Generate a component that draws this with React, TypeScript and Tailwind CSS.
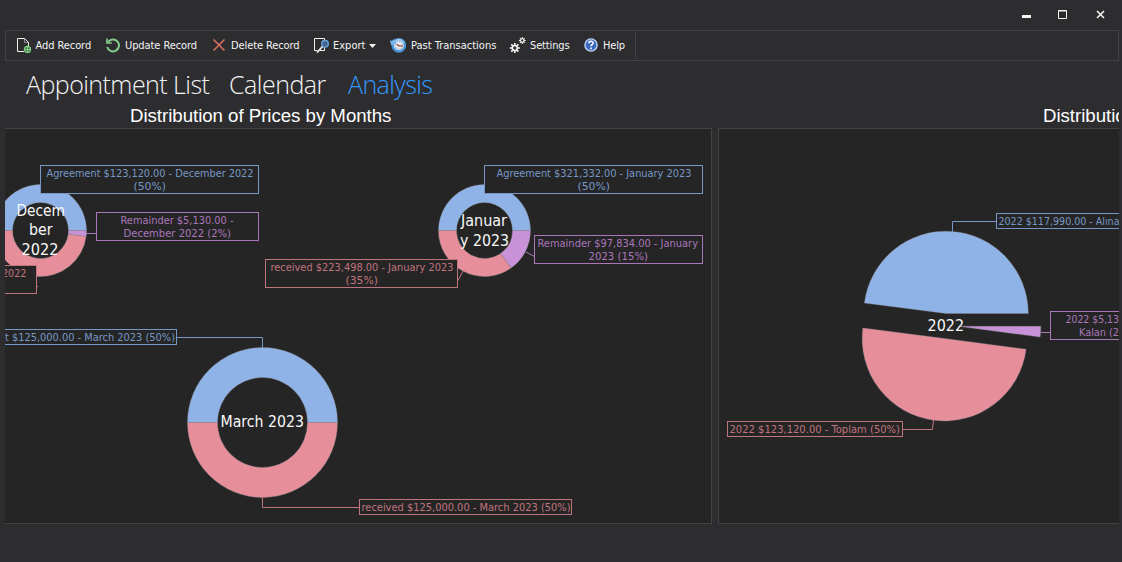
import type { ReactNode } from "react";

const BLUE = "#8fb3e6";
const RED = "#e68e99";
const PURPLE = "#c792d8";
const BLUE_LINE = "#7797c6";
const RED_LINE = "#c0747e";
const PURPLE_LINE = "#aa77ba";

function AddIcon() {
  return (
    <svg className="size-4 shrink-0" viewBox="0 0 16 16" fill="none">
      <path d="M8 14.500H1.500v-13h7l4 4V9" stroke="#f0f0f0" />
      <path d="M8.500 1.500v4h4" stroke="#f0f0f0" strokeOpacity=".6" strokeWidth=".8" />
      <circle cx="11.500" cy="12.500" r="3" fill="#2d2d30" stroke="#7fcf85" strokeWidth="1.300" />
      <path d="M11.500 10v5M9 12.500h5" stroke="#7fcf85" strokeWidth="1.300" />
    </svg>
  );
}

function UpdateIcon() {
  return (
    <svg className="size-4 shrink-0" viewBox="0 0 16 16" fill="none" stroke="#82cc88" strokeWidth="2">
      <path d="M3.200 4.800A6 6 0 1 1 2.200 10" />
      <path d="M2 1.500V6h4.800" strokeWidth="1.700" />
    </svg>
  );
}

function DeleteIcon() {
  return (
    <svg className="size-4 shrink-0" viewBox="0 0 16 16" stroke="#d8705f" strokeWidth="1.600">
      <path d="M1.500 2.500l11 11M12.500 2.500l-11 11" />
    </svg>
  );
}

function ExportIcon() {
  return (
    <svg className="size-4 shrink-0" viewBox="0 0 16 16" fill="none">
      <path d="M4.500 13.500h-3v-12h10v2M11.500 10v3.500H7" stroke="#f0f0f0" />
      <circle cx="12" cy="6.800" r="3.300" fill="#44618a" stroke="#65a5dc" strokeWidth="1.300" />
      <path d="M9.500 9.500L4 15.500" stroke="#f0f0f0" strokeWidth="1.800" />
    </svg>
  );
}

function HistoryIcon() {
  return (
    <svg className="size-4 shrink-0 overflow-visible" viewBox="0 0 16 16" fill="none">
      <circle cx="8.800" cy="8.300" r="6.200" fill="#dcebf8" stroke="#4d94d6" strokeWidth="2.400" />
      <path d="M3.500 6A6 6 0 0 1 14.500 6" stroke="#a9d3f5" strokeWidth="1" />
      <circle cx="8.800" cy="8.300" r="4" stroke="#9fb6cc" strokeWidth=".7" />
      <path d="M0 3l1.800 1L4 2l2.500 4.500L1 8z" fill="#78b8ec" />
      <path d="M6.500 7.200l2.300 1.600h4" stroke="#b4452f" strokeWidth="1.200" />
    </svg>
  );
}

function Gear({ x, y, r, w }: { x: number; y: number; r: number; w: number }) {
  return (
    <g transform={`translate(${x} ${y})`} stroke="#f0f0f0">
      {[0, 45, 90, 135].map((a) => (
        <path key={a} d={`M${-r} 0H${r}`} strokeWidth={w} transform={`rotate(${a})`} />
      ))}
      <circle r={r * 0.5} fill="#2d2d30" strokeWidth={w} />
    </g>
  );
}

function SettingsIcon() {
  return (
    <svg className="size-4 shrink-0 overflow-visible" viewBox="0 0 16 16">
      <Gear x={5.8} y={11} r={5} w={1.7} />
      <Gear x={13.3} y={3.5} r={3.4} w={1.1} />
    </svg>
  );
}

function HelpIcon() {
  return (
    <svg className="size-4 shrink-0" viewBox="0 0 16 16" fill="none">
      <circle cx="8" cy="8" r="6.100" fill="#3b69c2" stroke="#bdd5f2" strokeWidth="1.400" />
      <path d="M5.900 6.300c0-2.600 4.200-2.600 4.200-.2 0 1.500-2.100 1.500-2.100 3.200" stroke="#fff" strokeWidth="1.500" />
      <path d="M8 10.600v1.600" stroke="#fff" strokeWidth="1.600" />
    </svg>
  );
}

function Tool({ icon, label, className, caret }: { icon: ReactNode; label: string; className: string; caret?: boolean }) {
  return (
    <button className={`flex h-full items-center whitespace-nowrap ${className}`}>
      <span className="pb-0.5">{icon}</span>
      <span>{label}</span>
      {caret && (
        <svg className="h-1 w-[7px]" viewBox="0 0 7 4">
          <path d="M0 0h7L3.500 4z" fill="#f0f0f0" />
        </svg>
      )}
    </button>
  );
}

type TextProps = { x: number; x2?: number; y: number; size?: number; color?: string; children: string };

function Text({ x, x2, y, size = 11, color = "#f8f8f8", children }: TextProps) {
  return (
    <text x={x} y={y} fontSize={size} fill={color} textLength={x2 ? x2 - x : undefined} lengthAdjust="spacingAndGlyphs">
      {children}
    </text>
  );
}

function Box({ x, y, x2, y2, color }: { x: number; y: number; x2: number; y2: number; color: string }) {
  return <rect x={x} y={y} width={x2 - x} height={y2 - y} fill="#252525" stroke={color} />;
}

function Slice({ cx, cy, r, inner = 0, from, to, fill }: { cx: number; cy: number; r: number; inner?: number; from: number; to: number; fill: string }) {
  const at = (radius: number, deg: number) => {
    const a = (deg * Math.PI) / 180;
    return `${(cx + radius * Math.cos(a)).toFixed(2)} ${(cy + radius * Math.sin(a)).toFixed(2)}`;
  };
  const large = to - from > 180 ? 1 : 0;
  const back = inner ? `L${at(inner, to)}A${inner} ${inner} 0 ${large} 0 ${at(inner, from)}` : `L${cx} ${cy}`;
  return (
    <path
      d={`M${at(r, from)}A${r} ${r} 0 ${large} 1 ${at(r, to)}${back}Z`}
      fill={fill}
      stroke="#8f8f98"
      strokeOpacity=".45"
      strokeWidth=".8"
    />
  );
}

function MonthsChart() {
  return (
    <svg className="block h-[394px] w-[706px]" viewBox="5 129 706 394">
      <Slice cx={40.5} cy={230.5} r={46} inner={28} from={180} to={360} fill={BLUE} />
      <Slice cx={40.5} cy={230.5} r={46} inner={28} from={0} to={7.5} fill={PURPLE} />
      <Slice cx={40.5} cy={230.5} r={46} inner={28} from={7.5} to={180} fill={RED} />
      <path d="M86 233.500h10" stroke={PURPLE_LINE} />
      <path d="M36.500 286.500h1.500" stroke={RED_LINE} />
      <Text x={16.5} x2={65} y={216} size={16}>Decem</Text>
      <Text x={29} x2={52.5} y={235} size={16}>ber</Text>
      <Text x={21.5} x2={58.5} y={255} size={16}>2022</Text>
      <Box x={40.5} y={165.5} x2={258.5} y2={193.5} color={BLUE_LINE} />
      <Text x={46.5} x2={253.5} y={177} color={BLUE_LINE}>Agreement $123,120.00 - December 2022</Text>
      <Text x={133.5} x2={166} y={190} color={BLUE_LINE}>(50%)</Text>
      <Box x={96.5} y={212.5} x2={258.5} y2={240.5} color={PURPLE_LINE} />
      <Text x={120.5} x2={233.5} y={224} color={PURPLE_LINE}>Remainder $5,130.00 -</Text>
      <Text x={123.5} x2={231} y={237} color={PURPLE_LINE}>December 2022 (2%)</Text>
      <Box x={0} y={265.5} x2={36.5} y2={293.5} color={RED_LINE} />
      <Text x={2} x2={26.5} y={277} color={RED_LINE}>2022</Text>

      <Slice cx={484.5} cy={230.5} r={46} inner={28} from={180} to={360} fill={BLUE} />
      <Slice cx={484.5} cy={230.5} r={46} inner={28} from={0} to={54.8} fill={PURPLE} />
      <Slice cx={484.5} cy={230.5} r={46} inner={28} from={54.8} to={180} fill={RED} />
      <path d="M526 252l8.500 4.500" stroke={PURPLE_LINE} />
      <path d="M463 271l-5 9.500" stroke={RED_LINE} />
      <Text x={461} x2={507} y={226} size={16}>Januar</Text>
      <Text x={460} x2={509} y={246} size={16}>y 2023</Text>
      <Box x={484.5} y={165.5} x2={702.5} y2={193.5} color={BLUE_LINE} />
      <Text x={496.5} x2={691.5} y={177} color={BLUE_LINE}>Agreement $321,332.00 - January 2023</Text>
      <Text x={577.5} x2={610} y={190} color={BLUE_LINE}>(50%)</Text>
      <Box x={534.5} y={235.5} x2={702.5} y2={263.5} color={PURPLE_LINE} />
      <Text x={537.5} x2={698} y={247} color={PURPLE_LINE}>Remainder $97,834.00 - January</Text>
      <Text x={588.5} x2={648} y={260} color={PURPLE_LINE}>2023 (15%)</Text>
      <Box x={265.5} y={259.5} x2={457.5} y2={287.5} color={RED_LINE} />
      <Text x={270.5} x2={453.5} y={271} color={RED_LINE}>received $223,498.00 - January 2023</Text>
      <Text x={345.5} x2={378} y={284} color={RED_LINE}>(35%)</Text>

      <Slice cx={262.5} cy={422.5} r={75} inner={45} from={180} to={360} fill={BLUE} />
      <Slice cx={262.5} cy={422.5} r={75} inner={45} from={0} to={180} fill={RED} />
      <path d="M176.500 337.500h86V348" fill="none" stroke={BLUE_LINE} />
      <path d="M262.500 497v10.500H360" fill="none" stroke={RED_LINE} />
      <Text x={220.5} x2={304} y={427} size={16}>March 2023</Text>
      <Box x={0} y={329.5} x2={176.5} y2={344.5} color={BLUE_LINE} />
      <Text x={5} x2={175} y={341} color={BLUE_LINE}>t $125,000.00 - March 2023 (50%)</Text>
      <Box x={359.5} y={499.5} x2={571.5} y2={514.5} color={RED_LINE} />
      <Text x={361.5} x2={570.5} y={511} color={RED_LINE}>received $125,000.00 - March 2023 (50%)</Text>
    </svg>
  );
}

function YearChart() {
  return (
    <svg className="block h-[394px] w-[400px]" viewBox="719 129 400 394">
      <Slice cx={946} cy={313.5} r={82.3} from={187.3} to={360} fill={BLUE} />
      <Slice cx={958.5} cy={326.3} r={82.3} from={0} to={7.5} fill={PURPLE} />
      <Slice cx={944.5} cy={338.5} r={82.3} from={7.5} to={187.3} fill={RED} />
      <path d="M952.500 232v-10.500h44" fill="none" stroke={BLUE_LINE} />
      <path d="M1041 332.500h9.500" stroke={PURPLE_LINE} />
      <path d="M902.500 429.500h30l1-9.500" fill="none" stroke={RED_LINE} />
      <Text x={927.5} x2={964} y={331} size={16}>2022</Text>
      <Box x={996.5} y={213.5} x2={1130} y2={228.5} color={BLUE_LINE} />
      <Text x={998.5} x2={1119.5} y={225} color={BLUE_LINE}>2022 $117,990.00 - Alına</Text>
      <Box x={1050.5} y={311.5} x2={1130} y2={339.5} color={PURPLE_LINE} />
      <Text x={1065.5} x2={1119} y={323} color={PURPLE_LINE}>2022 $5,13</Text>
      <Text x={1079} x2={1119} y={336} color={PURPLE_LINE}>Kalan (2</Text>
      <Box x={727.5} y={421.5} x2={902.5} y2={436.5} color={RED_LINE} />
      <Text x={729.5} x2={900} y={433} color={RED_LINE}>2022 $123,120.00 - Toplam (50%)</Text>
    </svg>
  );
}

export default function App() {
  return (
    <div className="flex h-[562px] w-[1122px] flex-col overflow-hidden bg-[#2d2d30] pr-[3px] pl-[5px] font-['DejaVu_Sans_Condensed','DejaVu_Sans',sans-serif] text-[11px] text-[#f4f4f4]">
      <header className="flex h-[30px] shrink-0 justify-end pt-[9px] pr-3">
        <svg className="h-3 w-[88px]" viewBox="0 0 88 12" fill="none" stroke="#f4f4f4">
          <path d="M3 7.500h9" strokeWidth="3" />
          <path d="M39.500 1.500h8v8h-8zM39 2h9" />
          <path d="M78 2l7 7M85 2l-7 7" strokeWidth="1.600" />
        </svg>
      </header>
      <nav className="flex h-[31px] shrink-0 items-center border border-[#434346] pt-px pl-[10px]">
        <Tool icon={<AddIcon />} label="Add Record" className="w-[89px] gap-[3.5px] tracking-[-0.08px]" />
        <Tool icon={<UpdateIcon />} label="Update Record" className="w-[107px] gap-1 tracking-[-0.08px]" />
        <Tool icon={<DeleteIcon />} label="Delete Record" className="w-[101px] gap-[3px] tracking-[-0.1px]" />
        <Tool icon={<ExportIcon />} label="Export" className="w-[77px] gap-1 tracking-[0px]" caret />
        <Tool icon={<HistoryIcon />} label="Past Transactions" className="w-[119px] gap-[5px] tracking-[0px]" />
        <Tool icon={<SettingsIcon />} label="Settings" className="w-[74px] gap-[5px] tracking-[-0.15px]" />
        <Tool icon={<HelpIcon />} label="Help" className="w-[52px] gap-1 tracking-[-0.2px]" />
        <div className="mb-px h-[27px] w-px bg-[#434346]" />
      </nav>
      <div className="flex h-[43px] shrink-0 items-center pt-0.5 pl-[21px] font-['Open_Sans','Noto_Sans',sans-serif] text-[25px] leading-[34px] font-light whitespace-nowrap">
        <div className="w-[203px] tracking-[-0.55px]">Appointment List</div>
        <div className="w-[119px] tracking-[-0.5px]">Calendar</div>
        <div className="tracking-[-0.6px] text-[#3399ff]">Analysis</div>
      </div>
      <main className="flex h-[420px] shrink-0 gap-[6px]">
        <section className="w-[707px] shrink-0">
          <h2 className="h-6 pl-[125px] font-['Liberation_Sans',sans-serif] text-[18.67px] leading-[23px] tracking-[-0.03px] whitespace-nowrap text-white">Distribution of Prices by Months</h2>
          <div className="h-[396px] border-y border-r border-[#434346] bg-[#252525]">
            <MonthsChart />
          </div>
        </section>
        <section className="w-[401px] shrink-0 overflow-hidden">
          <h2 className="h-6 pl-[325px] font-['Liberation_Sans',sans-serif] text-[18.67px] leading-[23px] tracking-[-0.03px] whitespace-nowrap text-white">Distributio</h2>
          <div className="h-[396px] border-y border-l border-[#434346] bg-[#252525]">
            <YearChart />
          </div>
        </section>
      </main>
    </div>
  );
}
